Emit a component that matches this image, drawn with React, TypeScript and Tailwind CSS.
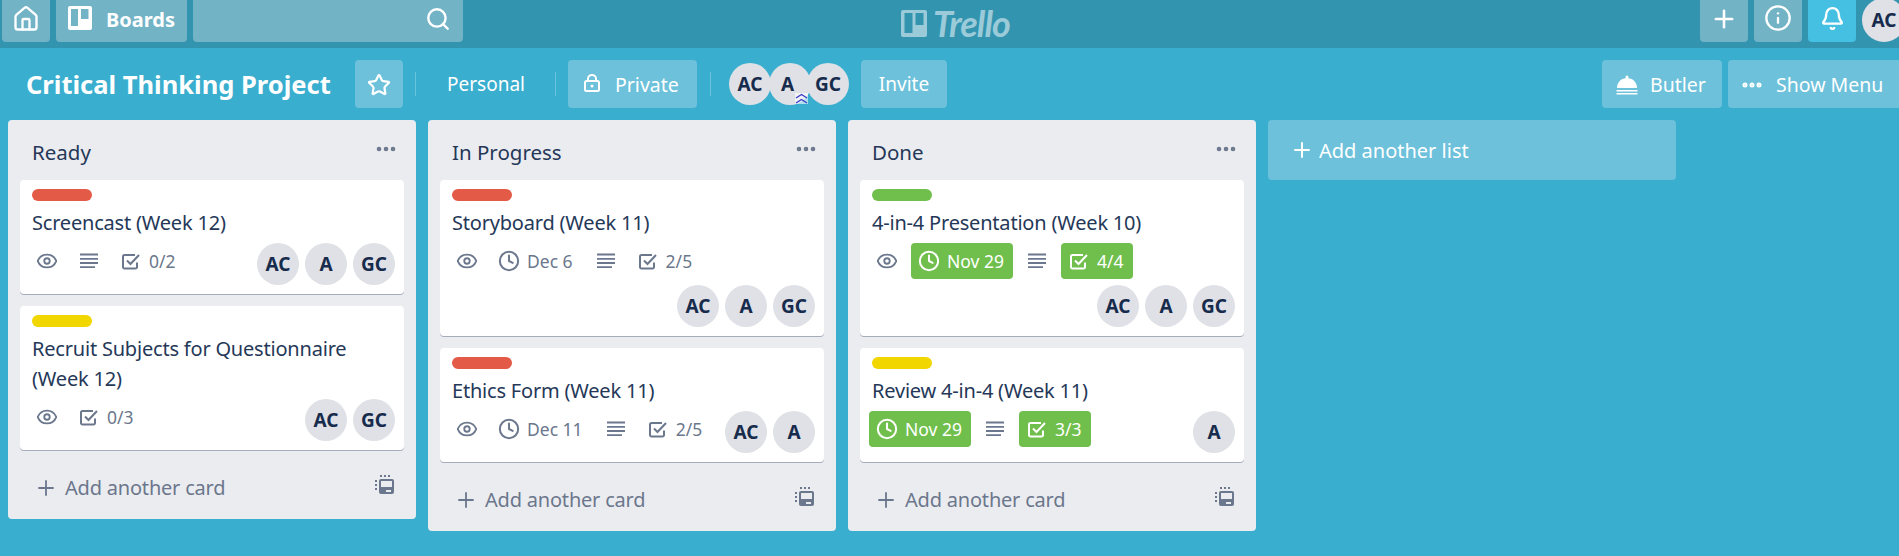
import { Plus, Search, Star, Info, Bell, Eye, Clock, Ellipsis, House } from "lucide-react";

const font = { fontFamily: '"Noto Sans", "Open Sans", sans-serif' };

type CardData = {
  label: string;
  title: string;
  eye?: boolean;
  due?: { text: string; done?: boolean };
  desc?: boolean;
  check?: { text: string; done?: boolean };
  members: string[];
};

const lists: { name: string; cards: CardData[] }[] = [
  {
    name: "Ready",
    cards: [
      { label: "bg-[#e35a46]", title: "Screencast (Week 12)", eye: true, desc: true, check: { text: "0/2" }, members: ["AC", "A", "GC"] },
      { label: "bg-[#f2d600]", title: "Recruit Subjects for Questionnaire (Week 12)", eye: true, check: { text: "0/3" }, members: ["AC", "GC"] },
    ],
  },
  {
    name: "In Progress",
    cards: [
      { label: "bg-[#e35a46]", title: "Storyboard (Week 11)", eye: true, due: { text: "Dec 6" }, desc: true, check: { text: "2/5" }, members: ["AC", "A", "GC"] },
      { label: "bg-[#e35a46]", title: "Ethics Form (Week 11)", eye: true, due: { text: "Dec 11" }, desc: true, check: { text: "2/5" }, members: ["AC", "A"] },
    ],
  },
  {
    name: "Done",
    cards: [
      { label: "bg-[#70bf4c]", title: "4-in-4 Presentation (Week 10)", eye: true, due: { text: "Nov 29", done: true }, desc: true, check: { text: "4/4", done: true }, members: ["AC", "A", "GC"] },
      { label: "bg-[#f2d600]", title: "Review 4-in-4 (Week 11)", due: { text: "Nov 29", done: true }, desc: true, check: { text: "3/3", done: true }, members: ["A"] },
    ],
  },
];

function Avatar({ name, className = "" }: { name: string; className?: string }) {
  return (
    <div className={`flex h-[42px] w-[42px] shrink-0 items-center justify-center rounded-full bg-[#dfe1e6] text-[19px] font-bold text-[#172b4d] ${className}`}>
      {name}
    </div>
  );
}

function Badge({ icon, text, done }: { icon: React.ReactNode; text?: string; done?: boolean }) {
  return (
    <div className={`mr-[6px] mb-[6px] flex h-[36px] items-center rounded-[4px] text-[17.5px] ${text ? "pr-[9px]" : ""} ${done ? "bg-[#70bf4c] text-white" : "text-[#6b778c]"}`}>
      <span className="flex h-[36px] w-[36px] items-center justify-center">{icon}</span>
      {text && <span>{text}</span>}
    </div>
  );
}

function DescIcon() {
  return (
    <svg width="18" height="16" viewBox="0 0 18 16" fill="none" stroke="currentColor" strokeWidth="1.800">
      <path d="M0 1.500h18M0 5.800h18M0 10h18M0 14.200h15" />
    </svg>
  );
}

function CheckIcon() {
  return (
    <svg width="18" height="17" viewBox="0 0 18 17" fill="none" stroke="currentColor" strokeWidth="2">
      <path d="M15 9.500V14a1.500 1.500 0 0 1-1.500 1.500h-11A1.500 1.500 0 0 1 1 14V3.500A1.500 1.500 0 0 1 2.500 2H13" />
      <path d="M5 7.500l3.500 3.500L17 2" />
    </svg>
  );
}

function Card({ card }: { card: CardData }) {
  return (
    <div className="mb-[12px] rounded-[4px] bg-white pt-[9px] pr-[9px] pl-[9px] shadow-[0_1px_0_#a5adba]">
      <div className={`ml-[3px] h-[12px] w-[60px] rounded-[6px] ${card.label}`} />
      <div className="mt-[7px] mb-[5px] pl-[3px] text-[20px] leading-[30px] tracking-[-0.2px] text-[#253858]">{card.title}</div>
      <div className="flex flex-wrap pb-[3px]">
        {card.eye && <Badge icon={<Eye size={22} strokeWidth={2} />} />}
        {card.due && <Badge icon={<Clock size={22} strokeWidth={2.2} />} text={card.due.text} done={card.due.done} />}
        {card.desc && <Badge icon={<DescIcon />} />}
        {card.check && <Badge icon={<CheckIcon />} text={card.check.text} done={card.check.done} />}
        <div className="ml-auto flex gap-[6px] pb-[6px]">
          {card.members.map((m) => (
            <Avatar key={m} name={m} />
          ))}
        </div>
      </div>
    </div>
  );
}

function TemplateIcon() {
  return (
    <svg width="20" height="20" viewBox="0 0 20 20" fill="none" className="mb-[6px]">
      <path d="M1 5v10M5 1h10" stroke="#6b778c" strokeWidth="2" strokeDasharray="2 2" />
      <rect x="4" y="4" width="15" height="15" rx="2" fill="#6b778c" />
      <rect x="6" y="6" width="11" height="6" fill="#ebecf0" />
      <rect x="11" y="15" width="5" height="2" fill="#ebecf0" />
    </svg>
  );
}

function List({ name, cards }: { name: string; cards: CardData[] }) {
  return (
    <div className="w-[408px] shrink-0 rounded-[4px] bg-[#ebecf0] px-[12px]">
      <div className="flex h-[60px] items-center justify-between pr-[6px] pl-[12px]">
        <span className="pt-[4px] text-[20.5px] text-[#253858]">{name}</span>
        <Ellipsis size={24} strokeWidth={2.6} className="mb-[2px] text-[#6b778c]" />
      </div>
      {cards.map((c) => (
        <Card key={c.title} card={c} />
      ))}
      <div className="flex h-[57px] items-center justify-between pr-[9px] pb-[6px] pl-[14px] text-[#6b778c]">
        <div className="flex items-center gap-[7px]">
          <Plus size={24} strokeWidth={1.8} />
          <span className="text-[20px] tracking-[-0.2px]">Add another card</span>
        </div>
        <TemplateIcon />
      </div>
    </div>
  );
}

function BoardButton({ children, className = "" }: { children: React.ReactNode; className?: string }) {
  return <div className={`flex h-[48px] shrink-0 items-center rounded-[4px] bg-[#6dc1db] pt-[1px] text-[19.5px] text-white ${className}`}>{children}</div>;
}

function Divider({ className = "" }: { className?: string }) {
  return <div className={`h-[24px] w-px shrink-0 bg-white/25 ${className}`} />;
}

function NavButton({ children, className = "" }: { children: React.ReactNode; className?: string }) {
  return <div className={`flex h-[42px] shrink-0 items-center justify-center rounded-b-[4px] text-white ${className}`}>{children}</div>;
}

function LockIcon() {
  return (
    <svg width="16" height="18" viewBox="0 0 16 18" fill="none" stroke="white" strokeWidth="2" className="mb-[3px]">
      <rect x="1" y="7" width="14" height="10" rx="1.500" />
      <path d="M4 7V4.500a4 3.500 0 0 1 8 0V7" />
      <circle cx="8" cy="12" r="1.500" fill="white" stroke="none" />
    </svg>
  );
}

function TrelloLogo() {
  return (
    <div className="flex items-center text-[#9bcbd8]">
      <svg width="26" height="27" viewBox="0 0 26 27">
        <path fillRule="evenodd" fill="currentColor" d="M2 0h22a2 2 0 0 1 2 2v23a2 2 0 0 1-2 2H2a2 2 0 0 1-2-2V2a2 2 0 0 1 2-2zm1.500 3v20h8V3zm11 0v12h8V3z" />
      </svg>
      <span className="ml-[6px] text-[36px] leading-none font-bold tracking-[-1px] italic" style={{ fontFamily: "Lato, sans-serif" }}>Trello</span>
    </div>
  );
}

export default function App() {
  return (
    <div className="h-[556px] w-[1899px] overflow-hidden bg-[#3aaecf]" style={font}>
      {/* top nav */}
      <div className="relative flex h-[48px] bg-[#3394b0] pl-[2px]">
        <NavButton className="w-[48px] bg-[#73b3c6]"><House size={28} strokeWidth={2} className="mb-[4px]" /></NavButton>
        <NavButton className="ml-[6px] w-[131px] justify-start bg-[#73b3c6] pl-[12px] text-[20px] font-bold">
          <svg width="24" height="24" viewBox="0 0 24 24" className="mb-[6px]">
            <path fillRule="evenodd" fill="white" d="M2 0h20a2 2 0 0 1 2 2v20a2 2 0 0 1-2 2H2a2 2 0 0 1-2-2V2a2 2 0 0 1 2-2zm1 3v17h7V3zm10 0v10h7.500V3z" />
          </svg>
          <span className="mb-[2px] ml-[14px]">Boards</span>
        </NavButton>
        <NavButton className="ml-[6px] w-[270px] justify-end bg-[#73b3c6] pr-[12px]"><Search size={26} strokeWidth={2.2} className="mb-[4px]" /></NavButton>
        <div className="absolute top-[5px] left-[901px]"><TrelloLogo /></div>
        <div className="ml-auto flex">
          <NavButton className="w-[48px] bg-[#73b3c6]"><Plus size={28} strokeWidth={2.2} className="mb-[4px]" /></NavButton>
          <NavButton className="ml-[6px] w-[48px] bg-[#73b3c6]"><Info size={28} strokeWidth={2} className="mb-[6px]" /></NavButton>
          <NavButton className="ml-[6px] w-[48px] bg-[#45c0e2]"><Bell size={25} strokeWidth={2.2} className="mb-[6px]" /></NavButton>
          <div className="mt-[-2px] mr-[-5px] ml-[6px] w-[42px]"><Avatar name="AC" className="h-[44px]! w-[44px]!" /></div>
        </div>
      </div>

      {/* board header */}
      <div className="flex h-[72px] items-center pr-0 pl-[26px]">
        <h1 className="w-[329px] pt-[1px] text-[25.5px] font-bold whitespace-nowrap text-white">Critical Thinking Project</h1>
        <BoardButton className="w-[48px] justify-center"><Star size={24} strokeWidth={2.2} /></BoardButton>
        <Divider className="ml-[12px]" />
        <span className="ml-[31px] w-[108px] pt-[1px] text-[19px] text-white">Personal</span>
        <Divider />
        <BoardButton className="ml-[12px] w-[129px] pl-[16px]">
          <LockIcon />
          <span className="ml-[15px]">Private</span>
        </BoardButton>
        <Divider className="ml-[13px]" />
        <div className="relative ml-[18px] flex h-[42px] w-[120px]">
          <Avatar name="AC" />
          <Avatar name="A" className="absolute left-[40px] pr-[5px]" />
          <Avatar name="GC" className="absolute left-[78px]" />
          <svg width="13" height="11" viewBox="0 0 13 11" fill="none" stroke="#3b3bc9" strokeWidth="1.400" className="absolute top-[30px] left-[66px] bg-white/60">
            <path d="M1 5 6.500 1.500 12 5M1 10 6.500 6.500 12 10" />
          </svg>
        </div>
        <BoardButton className="ml-[12px] w-[86px] justify-center text-[19px]!">Invite</BoardButton>
        <BoardButton className="ml-auto w-[120px] pl-[14px]">
          <svg width="22" height="20" viewBox="0 0 22 20" fill="white">
            <circle cx="11" cy="2" r="1.500" />
            <path d="M1 13C1 7 5.500 3 11 3s10 4 10 10z" />
            <rect x="0.500" y="15" width="21" height="1.500" />
            <rect x="0.500" y="18" width="21" height="1.500" />
          </svg>
          <span className="ml-[12px]">Butler</span>
        </BoardButton>
        <BoardButton className="mr-[-10px] ml-[6px] w-[181px] pl-[12px]">
          <Ellipsis size={24} strokeWidth={3} />
          <span className="ml-[12px]">Show Menu</span>
        </BoardButton>
      </div>

      {/* lists */}
      <div className="flex items-start gap-[12px] pl-[8px]">
        {lists.map((l) => (
          <List key={l.name} name={l.name} cards={l.cards} />
        ))}
        <div className="flex h-[60px] w-[408px] shrink-0 items-center gap-[5px] rounded-[4px] bg-[#6dc1db] pl-[22px] text-[20px] text-white">
          <Plus size={24} strokeWidth={2} />
          <span className="pt-[1px]">Add another list</span>
        </div>
      </div>
    </div>
  );
}
